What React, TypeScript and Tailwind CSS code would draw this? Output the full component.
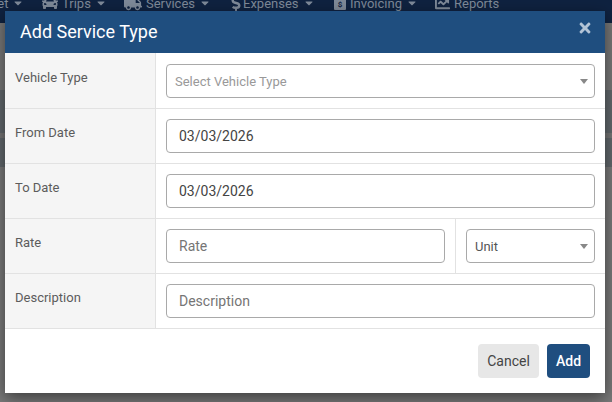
import React from "react";
import { FaCar, FaTruck, FaDollarSign, FaChartLine, FaCaretDown, FaTimes } from "react-icons/fa";

function NavItem({ icon, label, caret = true, w }: { icon: React.ReactNode; label: string; caret?: boolean; w: string }) {
  return (
    <div className={`flex shrink-0 items-center gap-[4px] ${w}`}>
      {icon}
      <span className="text-[13px] leading-none">{label}</span>
      {caret && <FaCaretDown className="text-[12px]" />}
    </div>
  );
}

function Row({ label, children, first = false }: { label: string; children: React.ReactNode; first?: boolean }) {
  return (
    <div className={`flex border-b border-[#e2e2e2] ${first ? "h-[56px]" : "h-[55px]"}`}>
      <div className={`w-[151px] shrink-0 border-r border-[#e2e2e2] bg-[#f5f5f5] pl-[10px] text-[13px] leading-[17px] text-[#5c5c5c] ${first ? "pt-[16px]" : "pt-[15px]"}`}>
        {label}
      </div>
      {children}
    </div>
  );
}

function Field({ value, placeholder, className = "" }: { value?: string; placeholder?: string; className?: string }) {
  return (
    <div className={`flex h-[34px] items-center rounded-[4px] border border-[#a9a9a9] bg-white pl-[12px] text-[14px] ${value ? "text-[#444]" : "text-[#757575]"} ${className}`}>
      {value ?? placeholder}
    </div>
  );
}

function Caret() {
  return <div className="h-0 w-0 border-x-[4px] border-t-[5px] border-x-transparent border-t-[#888]" />;
}

export default function App() {
  return (
    <div className="relative h-[402px] w-[612px] overflow-hidden bg-[#7a7a7a] font-['Roboto',sans-serif]">
      {/* dimmed page behind the dialog */}
      <div className="flex h-[23px] items-start overflow-hidden bg-[#0f2240] text-[#7f8a99]">
        <div className="-mt-[6px] flex items-center">
          <div className="-ml-[20px] flex w-[62px] shrink-0 items-center gap-[4px]">
            <span className="text-[13px] leading-none">Fleet</span>
            <FaCaretDown className="text-[12px]" />
          </div>
          <NavItem w="w-[82px]" label="Trips" icon={<FaCar className="text-[16px]" />} />
          <NavItem w="w-[107px]" label="Services" icon={<FaTruck className="text-[18px]" />} />
          <NavItem w="w-[103px]" label="Expenses" icon={<FaDollarSign className="-ml-[3px] -mr-[5px] text-[16px]" />} />
          <NavItem
            w="w-[101px]"
            label="Invoicing"
            icon={
              <svg width="12" height="14" viewBox="0 0 12 14">
                <rect width="12" height="14" rx="1" fill="#7f8a99" />
                <text x="6" y="11" textAnchor="middle" fontSize="8" fontWeight="700" fill="#0f2240">$</text>
              </svg>
            }
          />
          <NavItem w="w-[70px]" label="Reports" caret={false} icon={<FaChartLine className="text-[15px]" />} />
        </div>
      </div>
      <div className="h-[67px] bg-[#787878]" />
      <div className="h-[43px] bg-[#62686c]" />
      <div className="h-[5px] bg-[#757575]" />
      <div className="h-[29px] bg-[#62686c]" />
      <div className="h-[235px] bg-[#7a7a7a]" />

      {/* dialog */}
      <div className="absolute left-[5px] top-[11px] h-[382px] w-[600px] bg-white shadow-[0_5px_15px_rgba(0,0,0,0.5)]">
        <div className="flex h-[42px] items-center justify-between bg-[#1f4e7f] px-[15px] text-white">
          <span className="-mt-[1px] text-[18px] font-normal leading-none">Add Service Type</span>
          <FaTimes className="-mr-[3px] -mt-[8px] text-[16px] text-[#b3c4d6]" />
        </div>

        <Row first label="Vehicle Type">
          <div className="flex-1 px-[10px] pt-[11px]">
            <div className="flex h-[34px] w-[429px] items-center justify-between rounded-[4px] border border-[#a9a9a9] pl-[8px] pr-[6px] pt-[1px] text-[13px] text-[#999]">
              <span>Select Vehicle Type</span>
              <Caret />
            </div>
          </div>
        </Row>
        <Row label="From Date">
          <div className="flex-1 px-[10px] pt-[10px]">
            <Field value="03/03/2026" className="w-[429px]" />
          </div>
        </Row>
        <Row label="To Date">
          <div className="flex-1 px-[10px] pt-[10px]">
            <Field value="03/03/2026" className="w-[429px]" />
          </div>
        </Row>
        <Row label="Rate">
          <div className="flex flex-1">
            <div className="w-[300px] border-r border-[#e2e2e2] pl-[10px] pt-[10px]">
              <Field placeholder="Rate" className="w-[279px]" />
            </div>
            <div className="pl-[10px] pt-[10px]">
              <div className="flex h-[34px] w-[129px] items-center justify-between rounded-[4px] border border-[#a9a9a9] pl-[8px] pr-[6px] pt-[1px] text-[13px] text-[#555]">
                <span>Unit</span>
                <Caret />
              </div>
            </div>
          </div>
        </Row>
        <Row label="Description">
          <div className="flex-1 px-[10px] pt-[10px]">
            <Field placeholder="Description" className="w-[429px]" />
          </div>
        </Row>

        <div className="flex justify-end gap-[8px] pr-[15px] pt-[15px]">
          <button className="h-[34px] w-[61px] rounded-[4px] bg-[#e7e7e7] text-[14px] text-[#444]">Cancel</button>
          <button className="h-[34px] w-[43px] rounded-[4px] bg-[#1f4e7f] text-[14px] font-medium text-white">Add</button>
        </div>
      </div>
    </div>
  );
}
